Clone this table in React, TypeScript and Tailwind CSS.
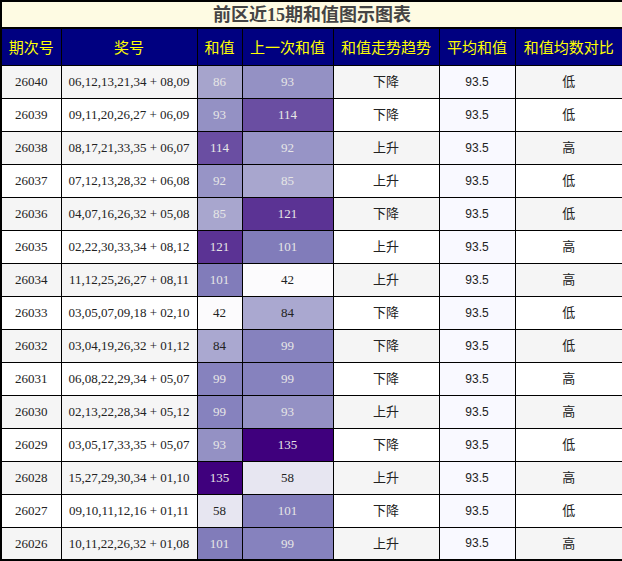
import React from "react";

type Row = {
  issue: string;
  nums: string;
  sum: number;
  prev: number;
  trend: string;
  cmp: string;
};

const rows: Row[] = [
  { issue: "26040", nums: "06,12,13,21,34 + 08,09", sum: 86, prev: 93, trend: "下降", cmp: "低" },
  { issue: "26039", nums: "09,11,20,26,27 + 06,09", sum: 93, prev: 114, trend: "下降", cmp: "低" },
  { issue: "26038", nums: "08,17,21,33,35 + 06,07", sum: 114, prev: 92, trend: "上升", cmp: "高" },
  { issue: "26037", nums: "07,12,13,28,32 + 06,08", sum: 92, prev: 85, trend: "上升", cmp: "低" },
  { issue: "26036", nums: "04,07,16,26,32 + 05,08", sum: 85, prev: 121, trend: "下降", cmp: "低" },
  { issue: "26035", nums: "02,22,30,33,34 + 08,12", sum: 121, prev: 101, trend: "上升", cmp: "高" },
  { issue: "26034", nums: "11,12,25,26,27 + 08,11", sum: 101, prev: 42, trend: "上升", cmp: "高" },
  { issue: "26033", nums: "03,05,07,09,18 + 02,10", sum: 42, prev: 84, trend: "下降", cmp: "低" },
  { issue: "26032", nums: "03,04,19,26,32 + 01,12", sum: 84, prev: 99, trend: "下降", cmp: "低" },
  { issue: "26031", nums: "06,08,22,29,34 + 05,07", sum: 99, prev: 99, trend: "下降", cmp: "高" },
  { issue: "26030", nums: "02,13,22,28,34 + 05,12", sum: 99, prev: 93, trend: "上升", cmp: "高" },
  { issue: "26029", nums: "03,05,17,33,35 + 05,07", sum: 93, prev: 135, trend: "下降", cmp: "低" },
  { issue: "26028", nums: "15,27,29,30,34 + 01,10", sum: 135, prev: 58, trend: "上升", cmp: "高" },
  { issue: "26027", nums: "09,10,11,12,16 + 01,11", sum: 58, prev: 101, trend: "下降", cmp: "低" },
  { issue: "26026", nums: "10,11,22,26,32 + 01,08", sum: 101, prev: 99, trend: "上升", cmp: "高" },
];

// purple heat scale, light (42) to dark (135)
const heat: Record<number, string> = {
  42: "bg-[#fcfbfd] text-[#222]",
  58: "bg-[#e7e6f1] text-[#222]",
  84: "bg-[#aaa8d0] text-[#222]",
  85: "bg-[#a8a6ce] text-[#e6e6e6]",
  86: "bg-[#a6a4cc] text-[#e6e6e6]",
  92: "bg-[#9794c6] text-[#e6e6e6]",
  93: "bg-[#9491c4] text-[#e6e6e6]",
  99: "bg-[#8682be] text-[#e6e6e6]",
  101: "bg-[#817cba] text-[#e6e6e6]",
  114: "bg-[#6a4ea2] text-[#e6e6e6]",
  121: "bg-[#5b3394] text-[#e6e6e6]",
  135: "bg-[#3f007d] text-[#e6e6e6]",
};

const headers = ["期次号", "奖号", "和值", "上一次和值", "和值走势趋势", "平均和值", "和值均数对比"];
const widths = [60, 136, 45, 91, 106, 76, 108];

const serif = "font-['Liberation_Serif','Noto_Sans_CJK_SC',serif]";

export default function App() {
  return (
    <div className="w-[622px] bg-white">
      <table
        className={`w-[622px] table-fixed border-collapse border-2 border-black text-[#222] ${serif}`}
      >
        <colgroup>
          {widths.map((w, i) => (
            <col key={i} style={{ width: w }} />
          ))}
        </colgroup>
        <thead>
          <tr>
            <th
              colSpan={7}
              className="h-[27px] border-2 border-black bg-[#fefbe3] p-0 text-center text-[18px] font-bold leading-none text-[#444]"
            >
              前区近15期和值图示图表
            </th>
          </tr>
          <tr className="bg-[#000080]">
            {headers.map((h) => (
              <th
                key={h}
                className="h-[37px] border border-black p-0 text-center text-[15px] font-normal text-[#ffff00] font-['Noto_Sans_CJK_SC',sans-serif]"
              >
                {h}
              </th>
            ))}
          </tr>
        </thead>
        <tbody>
          {rows.map((r, i) => (
            <tr key={r.issue} className={i % 2 === 0 ? "bg-[#f5f5f5]" : "bg-white"}>
              <td className="h-[33px] border border-black p-0 text-center text-[13px]">{r.issue}</td>
              <td className="border border-black p-0 text-center text-[13px]">{r.nums}</td>
              <td className={`border border-black p-0 text-center text-[13px] ${heat[r.sum]}`}>{r.sum}</td>
              <td className={`border border-black p-0 text-center text-[13px] ${heat[r.prev]}`}>{r.prev}</td>
              <td className="border border-black p-0 text-center text-[13px]">{r.trend}</td>
              <td className="border border-black bg-[#f9f9ff] p-0 text-center text-[12px] font-['Liberation_Sans',sans-serif]">
                93.5
              </td>
              <td className="border border-black p-0 text-center text-[13px]">{r.cmp}</td>
            </tr>
          ))}
        </tbody>
      </table>
    </div>
  );
}
